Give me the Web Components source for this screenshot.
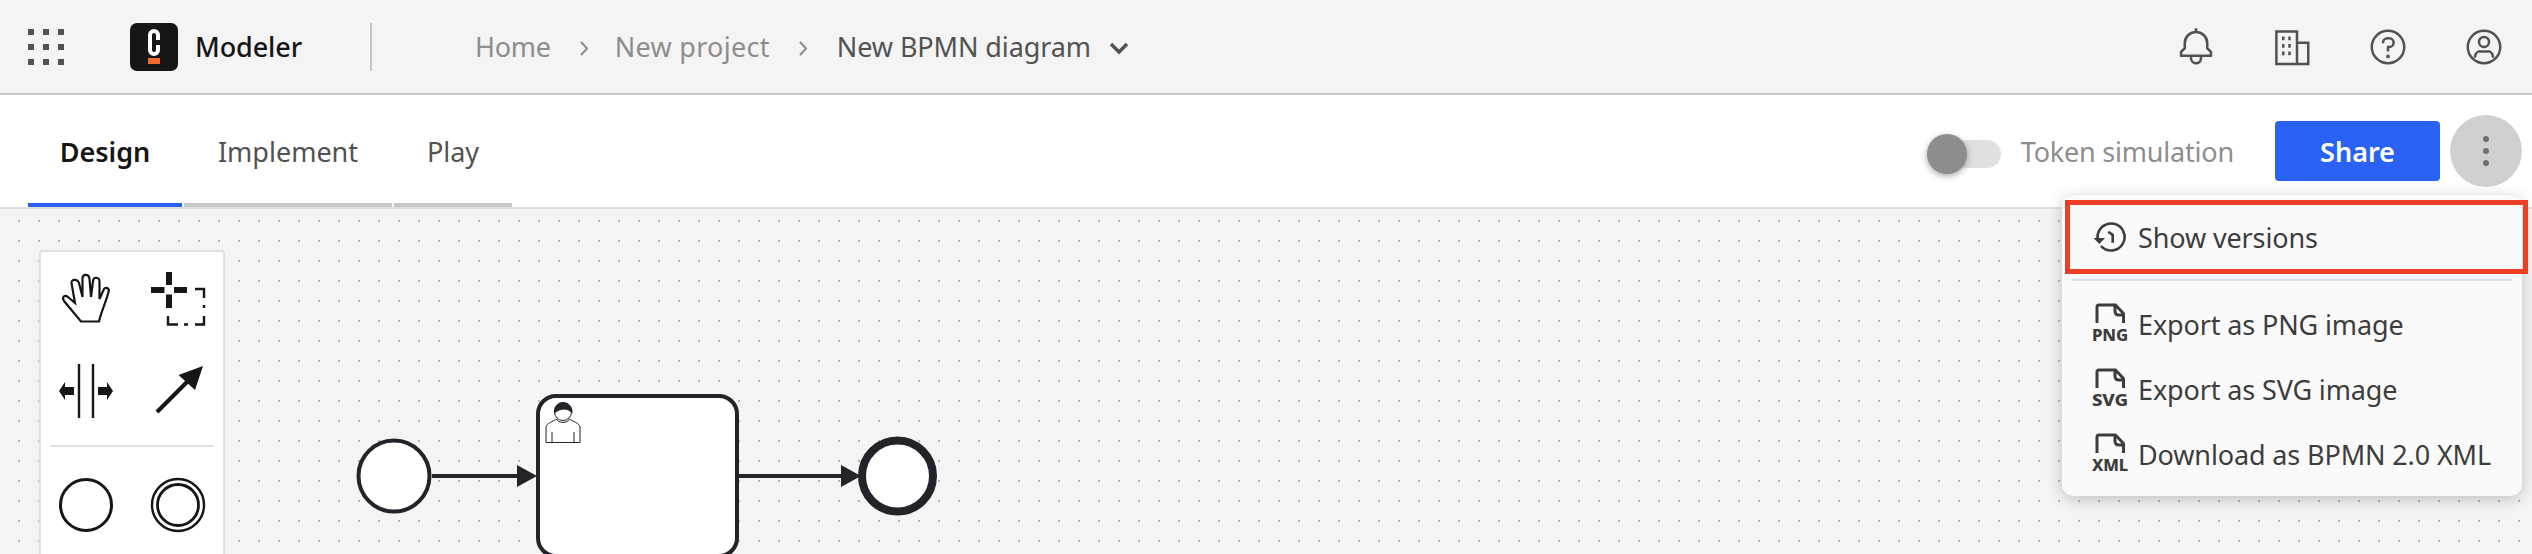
<!DOCTYPE html>
<html lang="en">
<head>
<meta charset="utf-8">
<title>Modeler</title>
<style>
  html, body { margin: 0; width: 2532px; height: 554px; overflow: hidden; background: #f4f4f4; }
  body { font-family: "Noto Sans", "Liberation Sans", sans-serif; color: #393939; }
</style>
</head>
<body>
<modeler-app>
  <modeler-header slot="header">
    <nav-crumb slot="crumbs" style="letter-spacing:-.3px;--sep-r:27px">Home</nav-crumb>
    <nav-crumb slot="crumbs" style="letter-spacing:.3px">New project</nav-crumb>
    <nav-crumb slot="crumbs" style="letter-spacing:-.1px" current>New BPMN diagram</nav-crumb>
    <header-icon slot="icons" name="bell"></header-icon>
    <header-icon slot="icons" name="building"></header-icon>
    <header-icon slot="icons" name="help"></header-icon>
    <header-icon slot="icons" name="user"></header-icon>
  </modeler-header>
  <mode-bar slot="tabs">
    <mode-tab active style="--tab-w:154px">Design</mode-tab>
    <mode-tab style="--tab-w:208px">Implement</mode-tab>
    <mode-tab style="--tab-w:118px">Play</mode-tab>
    <token-toggle slot="actions">Token simulation</token-toggle>
    <share-button slot="actions">Share</share-button>
    <more-button slot="actions"></more-button>
  </mode-bar>
  <bpmn-canvas slot="canvas">
    <tool-palette></tool-palette>
    <export-menu>
      <menu-row icon="history" highlight>Show versions</menu-row>
      <menu-row icon="PNG">Export as PNG image</menu-row>
      <menu-row icon="SVG">Export as SVG image</menu-row>
      <menu-row icon="XML">Download as BPMN 2.0 XML</menu-row>
    </export-menu>
  </bpmn-canvas>
</modeler-app>

<script>
const FONT = `"Noto Sans", "Liberation Sans", sans-serif`;

function shadow(el, html) {
  const root = el.attachShadow({ mode: "open" });
  root.innerHTML = html;
  return root;
}

class ModelerApp extends HTMLElement {
  constructor() {
    super();
    shadow(this, `
      <style>
        :host { display: flex; flex-direction: column; width: 2532px; height: 554px; overflow: hidden; font-family: ${FONT}; }
        .canvas { flex: 1; min-height: 0; display: flex; }
      </style>
      <slot name="header"></slot>
      <slot name="tabs"></slot>
      <div class="canvas"><slot name="canvas"></slot></div>
    `);
  }
}

class ModelerHeader extends HTMLElement {
  constructor() {
    super();
    shadow(this, `
      <style>
        :host { display: flex; align-items: center; box-sizing: border-box; height: 95px; padding: 0 28px; background: #f4f4f4; border-bottom: 2px solid #c6c6c6; }
        .apps { width: 36px; height: 36px; display: grid; grid-template-columns: repeat(3, 6px); grid-template-rows: repeat(3, 6px); justify-content: space-between; align-content: space-between; margin-right: 66px; }
        .apps i { background: #525252; }
        .logo { display: block; width: 48px; height: 48px; margin-right: 17px; }
        .name { font-size: 27px; font-weight: 500; color: #161616; width: 105px; white-space: nowrap; letter-spacing: -.1px; }
        .rule { width: 2px; height: 48px; background: #c6c6c6; margin: 0 103px 0 70px; }
        .crumbs { display: flex; align-items: center; flex: 1; }
        .icons { display: flex; gap: 56px; }
      </style>
      <div class="apps"><i></i><i></i><i></i><i></i><i></i><i></i><i></i><i></i><i></i></div>
      <svg class="logo" viewBox="0 0 48 48">
        <rect width="48" height="48" rx="7" fill="#161616"/>
        <path d="M28 17 V12 a4 4 0 0 0 -8 0 V27 a4 4 0 0 0 8 0 V22" fill="none" stroke="#fff" stroke-width="4"/>
        <rect x="18" y="35" width="12" height="6" fill="#f26a2d"/>
      </svg>
      <span class="name">Modeler</span>
      <div class="rule"></div>
      <div class="crumbs"><slot name="crumbs"></slot></div>
      <div class="icons"><slot name="icons"></slot></div>
    `);
  }
}

class NavCrumb extends HTMLElement {
  constructor() {
    super();
    const current = this.hasAttribute("current");
    shadow(this, `
      <style>
        :host { display: inline-flex; align-items: center; font-size: 27px; color: ${current ? "#525252" : "#8d8d8d"}; white-space: nowrap; }
        svg { display: block; }
        .sep { width: 8px; height: 15px; margin: 3px var(--sep-r, 30px) 0 29px; }
        .down { width: 20px; height: 14px; margin: 2px 0 0 18px; }
      </style>
      <slot></slot>
      ${current
        ? `<svg class="down" viewBox="0 0 20 14"><path d="M2 3 L10 11 L18 3" fill="none" stroke="#525252" stroke-width="3.4"/></svg>`
        : `<svg class="sep" viewBox="0 0 8 15"><path d="M1 1 L7 7.5 L1 14" fill="none" stroke="#8d8d8d" stroke-width="2"/></svg>`}
    `);
  }
}

const TOP_ICONS = {
  bell: `<path d="M28.7071,19.293,26,16.5859V13a10.0136,10.0136,0,0,0-9-9.9492V1H15V3.0508A10.0136,10.0136,0,0,0,6,13v3.5859L3.2929,19.293A1,1,0,0,0,3,20v3a1,1,0,0,0,1,1h7v.7768a5.152,5.152,0,0,0,4.5,5.1987A5.0057,5.0057,0,0,0,21,25V24h7a1,1,0,0,0,1-1V20A1,1,0,0,0,28.7071,19.293ZM19,25a3,3,0,0,1-6,0V24h6Zm8-3H5V20.4141L7.707,17.707A1,1,0,0,0,8,17V13a8,8,0,0,1,16,0v4a1,1,0,0,0,.293.707L27,20.4141Z"/>`,
  building: `<path d="M3.5 3.5 H20 V29.5 H3.5 Z M20 12.5 H29 V29.5 H20" fill="none" stroke="#525252" stroke-width="2"/><path d="M8 7.5h2v3H8zM13 7.5h2v3h-2zM8 13.5h2v3H8zM13 13.5h2v3h-2zM8 19.5h2v3H8zM13 19.5h2v3h-2z"/>`,
  help: `<path d="M16,2A14,14,0,1,0,30,16,14,14,0,0,0,16,2Zm0,26A12,12,0,1,1,28,16,12,12,0,0,1,16,28Z"/><circle cx="16" cy="23.5" r="1.5"/><path d="M17,8H15.5A4.49,4.49,0,0,0,11,12.5V13h2v-.5A2.5,2.5,0,0,1,15.5,10H17a2.5,2.5,0,0,1,0,5H15v4.5h2V17a4.5,4.5,0,0,0,0-9Z"/>`,
  user: `<path d="M16,2A14,14,0,1,0,30,16,14,14,0,0,0,16,2Zm0,26A12,12,0,1,1,28,16,12,12,0,0,1,16,28Z"/><path d="M16,7a5,5,0,1,0,5,5A5,5,0,0,0,16,7Zm0,8a3,3,0,1,1,3-3A3,3,0,0,1,16,15Z"/><path d="M13 18.5 h6 a5 5 0 0 1 5 4.5 l.2 1.5 h-2 l-.2-1.3 a3 3 0 0 0 -3-2.7 h-6 a3 3 0 0 0 -3 2.7 l-.2 1.3 h-2 l.2-1.5 a5 5 0 0 1 5-4.5 Z"/>`,
};

class HeaderIcon extends HTMLElement {
  constructor() {
    super();
    shadow(this, `
      <style>
        :host { display: block; width: 40px; height: 40px; }
        svg { display: block; width: 40px; height: 40px; fill: #525252; }
      </style>
      <svg viewBox="0 0 32 32">${TOP_ICONS[this.getAttribute("name")] || ""}</svg>
    `);
  }
}

class ModeBar extends HTMLElement {
  constructor() {
    super();
    shadow(this, `
      <style>
        :host { display: flex; box-sizing: border-box; height: 114px; padding: 0 10px 0 28px; background: #fff; border-bottom: 2px solid #e0e0e0; }
        .tabs { display: flex; gap: 2px; flex: 1; }
        .actions { display: flex; align-items: center; }
      </style>
      <div class="tabs"><slot></slot></div>
      <div class="actions"><slot name="actions"></slot></div>
    `);
  }
}

class ModeTab extends HTMLElement {
  constructor() {
    super();
    const active = this.hasAttribute("active");
    shadow(this, `
      <style>
        :host { display: flex; align-items: center; justify-content: center; box-sizing: border-box; width: var(--tab-w); height: 112px; font-size: 27px; border-bottom: 4px solid ${active ? "#2962f5" : "#c6c6c6"}; color: ${active ? "#161616" : "#525252"}; font-weight: ${active ? 600 : 400}; padding-top: 4px; }
      </style>
      <slot></slot>
    `);
  }
}

class TokenToggle extends HTMLElement {
  constructor() {
    super();
    shadow(this, `
      <style>
        :host { display: flex; align-items: center; margin-right: 41px; font-size: 27px; letter-spacing: -.2px; color: #8d8d8d; white-space: nowrap; }
        .track { position: relative; width: 74px; height: 28px; margin-top: 6px; border-radius: 14px; background: #e0e0e0; margin-right: 20px; }
        .thumb { position: absolute; left: 0; top: -6px; width: 40px; height: 40px; border-radius: 50%; background: #8d8d8d; box-shadow: 0 2px 6px rgba(0,0,0,.35); }
      </style>
      <div class="track"><div class="thumb"></div></div>
      <slot></slot>
    `);
  }
}

class ShareButton extends HTMLElement {
  constructor() {
    super();
    shadow(this, `
      <style>
        :host { display: flex; align-items: center; justify-content: center; width: 165px; height: 60px; border-radius: 4px; background: #2962f5; color: #fff; font-size: 27px; font-weight: 600; margin-right: 10px; }
      </style>
      <slot></slot>
    `);
  }
}

class MoreButton extends HTMLElement {
  constructor() {
    super();
    shadow(this, `
      <style>
        :host { display: flex; flex-direction: column; align-items: center; justify-content: center; gap: 6px; width: 72px; height: 72px; border-radius: 50%; background: #d0d0d0; }
        i { width: 6px; height: 6px; border-radius: 50%; background: #6f6f6f; }
      </style>
      <i></i><i></i><i></i>
    `);
  }
}

class BpmnCanvas extends HTMLElement {
  constructor() {
    super();
    shadow(this, `
      <style>
        :host { display: block; position: relative; width: 2532px; height: 345px; background-color: #f4f4f4;
          background-image: radial-gradient(circle at 1px 1px, #b4b4b4 0, #b4b4b4 1px, transparent 1.2px);
          background-size: 20px 20px; background-position: 18px -9px; }
        svg { position: absolute; left: 0; top: 0; }
      </style>
      <svg width="2532" height="345" viewBox="0 209 2532 345" fill="none" stroke="#22242a">
        <circle cx="394" cy="476" r="35.5" fill="#fff" stroke-width="4"/>
        <rect x="538" y="396" width="199" height="160" rx="18" fill="#fff" stroke-width="4"/>
        <circle cx="897.5" cy="476" r="35.5" fill="#fff" stroke-width="8"/>
        <path d="M432 476 H520 M739 476 H843" stroke-width="4"/>
        <path d="M517 465 L537 476 L517 487 Z M841 465 L861 476 L841 487 Z" fill="#22242a" stroke="none"/>
        <g stroke-width="1" fill="#fff">
          <path d="M546 442.5 H580 V427 C580 423.5 572 421 569.5 419 C568 423.5 558 423.5 556.5 419 C554 421 546 423.5 546 427 Z"/>
          <path d="M552 442 V432 M574 442 V432" fill="none"/>
          <circle cx="563" cy="412" r="8.5"/>
          <path d="M554.5 413 C553 399 573 399 572 413 C568 407.5 560 408 554.5 413 Z" fill="#22242a"/>
        </g>
      </svg>
      <slot></slot>
    `);
  }
}

class ToolPalette extends HTMLElement {
  constructor() {
    super();
    shadow(this, `
      <style>
        :host { display: block; position: absolute; left: 39px; top: 41px; box-sizing: border-box; width: 186px; height: 340px; background: #fff; border: 2px solid #e0e0e0; border-radius: 4px; }
        .grid { display: grid; grid-template-columns: 90px 90px; column-gap: 2px; grid-auto-rows: 92px; }
        .cell { display: flex; align-items: center; justify-content: center; }
        hr { height: 2px; margin: 9px 9px 12px 9px; border: 0; background: #e0e0e0; }
        svg { display: block; width: 60px; height: 60px; fill: none; stroke: #161616; stroke-width: 2.2; }
      </style>
      <div class="grid">
        <div class="cell"><svg viewBox="56 268 60 60">
          <path d="M99 321.5 H81 L64 301 C61.5 297 64.5 294.5 68 297 L75 303 L71.5 283 C71 279 77.5 278.5 79 283 L82.5 297 L82.5 279 C82.5 273.5 89 273.5 89.5 279 L91 297 L93 281 C93.5 276.5 99.5 276.5 99.5 282 L99.5 299 L103.5 290 C105 286 110 288 108.5 292 C105 305 101 312 99 321.5 Z"/>
        </svg></div>
        <div class="cell"><svg viewBox="148 268 60 60">
          <path d="M151 290 H164.5 M174 290 H187 M169 272 V285 M169 294.5 V308" stroke-width="6"/>
          <path d="M195 289 H204 V298 M204 305 V308 M168 316 V324.5 H178 M184 324.5 H188 M195 324.5 H204 V316" stroke-width="2.4"/>
        </svg></div>
        <div class="cell"><svg viewBox="56 360 60 60">
          <path d="M79 364 V418 M93 364 V418" stroke-width="2.4"/>
          <path d="M59 391 L65 382 V387 H74 V395 H65 V400 Z M113 391 L107 382 V387 H98 V395 H107 V400 Z" fill="#161616" stroke="none"/>
        </svg></div>
        <div class="cell"><svg viewBox="148 360 60 60">
          <path d="M157 412 L189 380" stroke-width="4"/>
          <path d="M203 366 L178.5 375 L195 390 Z" fill="#161616" stroke="none"/>
        </svg></div>
      </div>
      <hr>
      <div class="grid">
        <div class="cell"><svg viewBox="56 474.5 60 60"><circle cx="86" cy="504.5" r="25.5" stroke-width="3"/></svg></div>
        <div class="cell"><svg viewBox="148 474.5 60 60"><circle cx="178" cy="504.5" r="26" stroke-width="2.4"/><circle cx="178" cy="504.5" r="20.5" stroke-width="2.8"/></svg></div>
      </div>
    `);
  }
}

class ExportMenu extends HTMLElement {
  constructor() {
    super();
    shadow(this, `
      <style>
        :host { display: block; position: absolute; z-index: 5; left: 2062px; top: -14px; box-sizing: border-box; width: 460px; height: 301px; padding-top: 5px; background: #fafafa; border-radius: 12px; box-shadow: 0 3px 16px rgba(0,0,0,.22); }
        ::slotted(menu-row:first-child) { margin-bottom: 18px; }
      </style>
      <slot></slot>
    `);
  }
}

class MenuRow extends HTMLElement {
  constructor() {
    super();
    const icon = this.getAttribute("icon");
    const highlight = this.hasAttribute("highlight");
    const glyph = icon === "history"
      ? `<svg viewBox="0 0 44 44"><g fill="none" stroke="#3d3d3d" stroke-width="2.6">
            <path d="M7.6 23 A13.5 13.5 0 1 1 11 31"/>
            <path d="M18.3 16.7 L22.7 20 V27.7"/></g>
            <path d="M3.5 23 H15 L9.3 29 Z" fill="#3d3d3d"/></svg>`
      : `<svg viewBox="0 0 44 44"><path d="M7 20 V4 q0-2 2-2 H25.5 L33.5 10.5 V20 M25 2 v6 q0 4 4 4 h5" fill="none" stroke="#3d3d3d" stroke-width="3"/>
            <text x="20" y="38" text-anchor="middle" font-family="'Noto Sans', sans-serif" font-size="16" font-weight="800" fill="#3d3d3d" textLength="36" lengthAdjust="spacingAndGlyphs">${icon}</text></svg>`;
    shadow(this, `
      <style>
        :host { display: flex; align-items: center; position: relative; box-sizing: border-box; height: ${highlight ? 74 : 65}px; padding-left: 28px; font-size: 27px; letter-spacing: -.13px; color: #3d3d3d; white-space: nowrap; }
        svg { display: block; width: 44px; height: 44px; margin-right: 4px; flex: none; }
        .mark { position: absolute; left: 3px; top: 0; box-sizing: border-box; width: 463px; height: 74px; border: 5px solid #ea3f24; }
        .sep { position: absolute; left: 10px; right: 10px; bottom: -7px; height: 2px; background: #dcdde5; }
      </style>
      ${glyph}
      <slot></slot>
      ${highlight ? `<div class="mark"></div><div class="sep"></div>` : ""}
    `);
  }
}

customElements.define("modeler-app", ModelerApp);
customElements.define("modeler-header", ModelerHeader);
customElements.define("nav-crumb", NavCrumb);
customElements.define("header-icon", HeaderIcon);
customElements.define("mode-bar", ModeBar);
customElements.define("mode-tab", ModeTab);
customElements.define("token-toggle", TokenToggle);
customElements.define("share-button", ShareButton);
customElements.define("more-button", MoreButton);
customElements.define("bpmn-canvas", BpmnCanvas);
customElements.define("tool-palette", ToolPalette);
customElements.define("export-menu", ExportMenu);
customElements.define("menu-row", MenuRow);
</script>
</body>
</html>
